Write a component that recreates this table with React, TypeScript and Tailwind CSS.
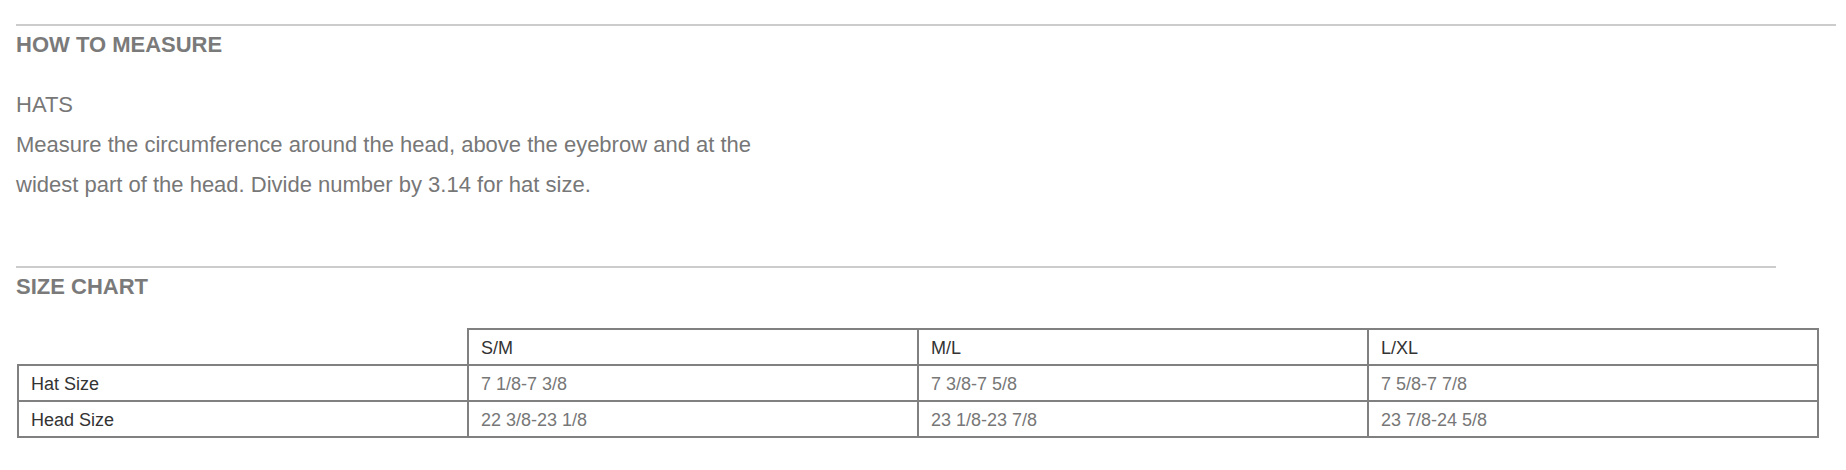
import React from "react";

type SizeRow = {
  label: string;
  values: string[];
};

const columns = ["S/M", "M/L", "L/XL"];

const rows: SizeRow[] = [
  { label: "Hat Size", values: ["7 1/8-7 3/8", "7 3/8-7 5/8", "7 5/8-7 7/8"] },
  { label: "Head Size", values: ["22 3/8-23 1/8", "23 1/8-23 7/8", "23 7/8-24 5/8"] },
];

const App = () => {
  return (
    <div
      className="w-[1846px] h-[470px] bg-white pt-[24px] pl-[16px] pr-[10px]"
      style={{ fontFamily: '"Liberation Sans", Arial, Helvetica, sans-serif' }}
    >
      {/* how to measure */}
      <div className="border-t-2 border-[#cccccc]">
        <h2 className="pt-[1px] text-[22px] leading-[36px] font-bold text-[#7a7a7a]">HOW TO MEASURE</h2>
        <div className="mt-[22px] text-[22px] leading-[40px] text-[#777777]">
          <p>HATS</p>
          <p>
            Measure the circumference around the head, above the eyebrow and at the
            <br />
            widest part of the head. Divide number by 3.14 for hat size.
          </p>
        </div>
      </div>

      {/* size chart */}
      <div className="mt-[61px] w-[1760px] border-t-2 border-[#cccccc]">
        <h2 className="pt-[1px] text-[22px] leading-[36px] font-bold text-[#7a7a7a]">SIZE CHART</h2>
      </div>

      <table className="mt-[23px] ml-[1px] w-[1802px] table-fixed border-collapse text-[18px] text-left">
        <thead>
          <tr className="h-[36px]">
            <th className="border-0 p-0"></th>
            {columns.map((c) => (
              <th key={c} className="border-2 border-[#808080] pl-[12px] pt-[2px] font-normal text-[#333333]">
                {c}
              </th>
            ))}
          </tr>
        </thead>
        <tbody>
          {rows.map((r) => (
            <tr key={r.label} className="h-[36px]">
              <td className="border-2 border-[#808080] pl-[12px] pt-[2px] text-[#333333]">{r.label}</td>
              {r.values.map((v, i) => (
                <td key={i} className="border-2 border-[#808080] pl-[12px] pt-[2px] text-[#777777]">
                  {v}
                </td>
              ))}
            </tr>
          ))}
        </tbody>
      </table>
    </div>
  );
};

export default App;
